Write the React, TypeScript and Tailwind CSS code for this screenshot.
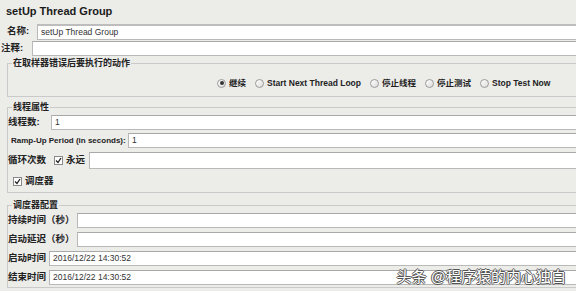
const Input = ({ value = "", className = "" }: { value?: string; className?: string }) => (
  <div
    className={`flex-1 flex items-center bg-white border border-[#b9b9b9] border-t-[#a8a8a8] pl-[3px] text-[8.5px] text-[#333] ${className}`}
  >
    {value}
  </div>
);

const Radio = ({ checked = false, label }: { checked?: boolean; label: string }) => (
  <div className="flex items-center gap-[3px]">
    <div className="w-[9px] h-[9px] rounded-full border border-[#9a9a9a] bg-gradient-to-br from-white to-[#dcdcdc] flex items-center justify-center">
      {checked && <div className="w-[4px] h-[4px] rounded-full bg-[#333]" />}
    </div>
    <span className="font-bold text-[#222]">{label}</span>
  </div>
);

const Check = ({ label }: { label: string }) => (
  <div className="flex items-center gap-[3px]">
    <div className="w-[9px] h-[9px] border border-[#8a8a8a] bg-white flex items-center justify-center">
      <svg width="7" height="7" viewBox="0 0 7 7">
        <path d="M1 3.5 L3 5.5 L6 1" stroke="#222" strokeWidth="1.3" fill="none" />
      </svg>
    </div>
    <span className="font-bold text-[9.5px] text-[#222]">{label}</span>
  </div>
);

const Legend = ({ children }: { children: string }) => (
  <legend className="ml-[4px] px-[1px] h-[12px] leading-[12px] text-[9px] font-bold text-[#222]">{children}</legend>
);

const App = () => {
  return (
    <div className="relative w-[576px] h-[291px] overflow-hidden bg-[#ecece9] font-['Liberation_Sans','Noto_Sans_CJK_SC',sans-serif] text-[8.5px] text-[#222]">
      <div className="h-[23px] pl-[6px] pt-[5px] text-[11px] leading-[13px] font-bold text-[#1a1a1a]">
        setUp Thread Group
      </div>

      <div className="flex h-[17px] items-center w-[600px]">
        <span className="w-[37px] pl-[7px] text-[9.5px] font-bold">名称:</span>
        <Input value="setUp Thread Group" className="h-[16px] border-t-2 border-t-[#bdbdbd]" />
      </div>
      <div className="flex h-[17px] items-center w-[600px]">
        <span className="w-[32px] pl-[1px] text-[9.5px] font-bold">注释:</span>
        <Input className="h-[15px] bg-[#fffdfd]" />
      </div>

      <fieldset className="ml-[7px] w-[600px] border border-[#cacaca]">
        <Legend>在取样器错误后要执行的动作</Legend>
        <div className="flex items-center h-[12px] mt-[8px] mb-[7px] pl-[209px] gap-[9px]">
          <Radio checked label="继续" />
          <Radio label="Start Next Thread Loop" />
          <Radio label="停止线程" />
          <Radio label="停止测试" />
          <Radio label="Stop Test Now" />
        </div>
      </fieldset>

      <fieldset className="mt-[4px] ml-[7px] w-[600px] border border-[#cacaca]">
        <Legend>线程属性</Legend>
        <div className="flex h-[18px] items-center">
          <span className="w-[43px] text-[9.5px] font-bold">线程数:</span>
          <Input value="1" className="h-[15px]" />
        </div>
        <div className="flex h-[19px] items-center">
          <span className="w-[120px] pl-[3px] text-[8px] font-bold whitespace-nowrap">Ramp-Up Period (in seconds):</span>
          <Input value="1" className="h-[15px]" />
        </div>
        <div className="flex h-[21px] items-center">
          <span className="w-[46px] text-[9.5px] font-bold">循环次数</span>
          <div className="w-[35px]">
            <Check label="永远" />
          </div>
          <Input className="h-[17px]" />
        </div>
        <div className="flex h-[21px] items-center pl-[5px]">
          <Check label="调度器" />
        </div>
      </fieldset>

      <fieldset className="mt-[6px] ml-[7px] w-[600px] border border-[#cacaca]">
        <Legend>调度器配置</Legend>
        <div className="flex h-[19px] items-center">
          <span className="w-[69px] text-[9.5px] font-bold whitespace-nowrap">持续时间（秒）</span>
          <Input className="h-[15px]" />
        </div>
        <div className="flex h-[19px] items-center">
          <span className="w-[69px] text-[9.5px] font-bold whitespace-nowrap">启动延迟（秒）</span>
          <Input className="h-[15px]" />
        </div>
        <div className="flex h-[19px] items-center">
          <span className="w-[41px] text-[9.5px] font-bold">启动时间</span>
          <Input value="2016/12/22 14:30:52" className="h-[15px]" />
        </div>
        <div className="flex h-[19px] items-center">
          <span className="w-[41px] text-[9.5px] font-bold">结束时间</span>
          <Input value="2016/12/22 14:30:52" className="h-[15px]" />
        </div>
      </fieldset>

      <div className="absolute right-[10px] bottom-[5px] text-[15px] leading-[18px] text-white [text-shadow:1px_0_0_#555,-1px_0_0_#555,0_1px_0_#555,0_-1px_0_#555]">
        头条 @程序猿的内心独白
      </div>
    </div>
  );
};

export default App;
